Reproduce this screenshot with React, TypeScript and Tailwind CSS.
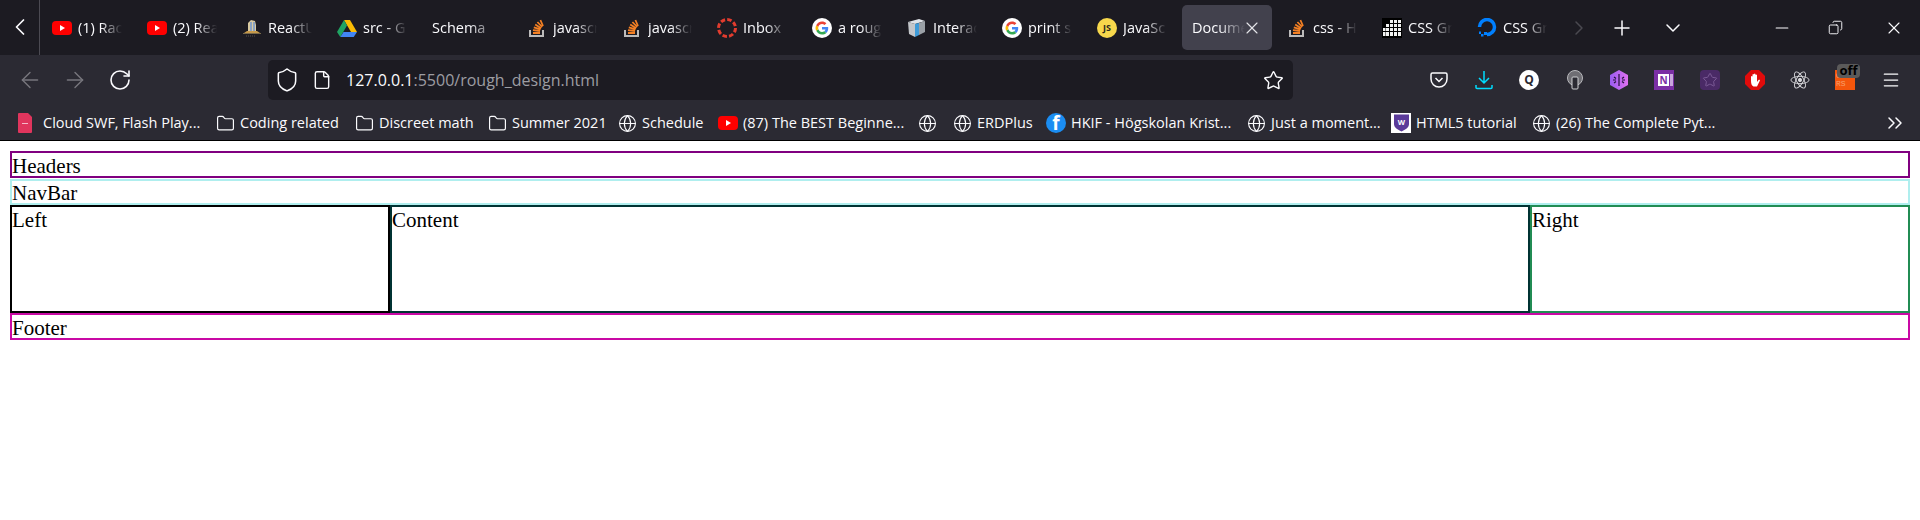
import React from 'react';
import {
  ArrowLeft,
  ArrowRight,
  ChevronDown,
  ChevronLeft,
  ChevronRight,
  ChevronsRight,
  Copy,
  Menu,
  Minus,
  Plus,
  RotateCw,
  Shield,
  Star,
  X,
  File,
  Folder,
  Globe,
} from 'lucide-react';

const YouTube = () => (
  <svg viewBox="0 0 20 14" className="w-5 h-[14px] shrink-0">
    <rect width="20" height="14" rx="4" fill="#ff0000" />
    <path d="M8 4l5 3-5 3z" fill="#fff" />
  </svg>
);

const StackOverflow = () => (
  <svg viewBox="0 0 20 20" className="w-5 h-5 shrink-0" fill="none">
    <path d="M3 12v6h13v-6" stroke="#bcbbbb" strokeWidth="2" />
    <path d="M6 15h7M6 12.2l7 .8M6.8 9.4l6.8 2M8.2 6.6l6 3.6M10.4 4l4.8 5M13.4 2l2.6 6" stroke="#f48024" strokeWidth="1.8" />
  </svg>
);

const GoogleG = () => (
  <svg viewBox="0 0 20 20" className="w-5 h-5 shrink-0">
    <circle cx="10" cy="10" r="10" fill="#fff" />
    <path d="M16.2 10.2c0-.5 0-.9-.1-1.3H10v2.5h3.5c-.2.8-.6 1.5-1.3 1.9l2.1 1.6c1.2-1.1 1.9-2.8 1.9-4.7z" fill="#4285f4" />
    <path d="M10 16.5c1.8 0 3.2-.6 4.3-1.6l-2.1-1.6c-.6.4-1.3.6-2.2.6-1.7 0-3.1-1.1-3.6-2.7L4.2 12.8c1.1 2.2 3.300 3.700 5.800 3.700z" fill="#34a853" />
    <path d="M6.400 11.200c-.3-.8-.3-1.600 0-2.400L4.200 7.200c-.9 1.800-.9 3.800 0 5.600z" fill="#fbbc05" />
    <path d="M10 6.100c1 0 1.800.3 2.500 1l1.900-1.900C13.200 4.100 11.700 3.500 10 3.500c-2.500 0-4.700 1.500-5.800 3.700l2.200 1.600c.5-1.600 1.900-2.700 3.600-2.700z" fill="#ea4335" />
  </svg>
);

const ReactU = () => (
  <svg viewBox="0 0 20 20" className="w-5 h-5 shrink-0">
    <path d="M6 14V5l3-3 4 1 1 4v7z" fill="#d9c9a0" />
    <path d="M8 4h2v10H8zM11 4h2v10h-2z" fill="#8aa2c0" />
    <path d="M5 13h10l3 2H2z" fill="#c79a4a" />
    <path d="M1 15.500h18" stroke="#7a6a4a" strokeWidth="1" />
    <path d="M4 18h10" stroke="#55534f" strokeWidth="1" strokeDasharray="1 1" />
  </svg>
);

const Drive = () => (
  <svg viewBox="0 0 20 20" className="w-5 h-5 shrink-0">
    <path d="M7 2h6l7 12h-6z" fill="#fbbc04" />
    <path d="M7 2l3 5.500L3.300 19 0 14z" fill="#1fa463" />
    <path d="M6.500 14H20l-3.300 5H3.300z" fill="#4285f4" />
  </svg>
);

const Canvas = () => (
  <svg viewBox="0 0 20 20" className="w-5 h-5 shrink-0" fill="none">
    <circle cx="10" cy="10" r="8.500" stroke="#e23c2e" strokeWidth="3" strokeDasharray="4.500 2.170" />
  </svg>
);

const Cube = () => (
  <svg viewBox="0 0 20 20" className="w-5 h-5 shrink-0">
    <path d="M1 4l11-3 6 2-10 3z" fill="#dfe3e8" />
    <path d="M1 4l7 2v13l-6-3z" fill="#c3c6ca" />
    <path d="M8 6l4-1v12l-4 2z" fill="#3f9bd8" />
    <path d="M12 5l6-2v11l-6 3z" fill="#9aa0a6" />
  </svg>
);

const JsBadge = () => (
  <div className="w-5 h-5 shrink-0 rounded-full bg-[#f7d84c] flex items-center justify-center text-[9px] font-bold text-[#2b2a1a]">
    JS
  </div>
);

const GridIcon = () => (
  <svg viewBox="0 0 20 20" className="w-5 h-5 shrink-0">
    <rect width="20" height="20" fill="#000" />
    <path d="M8 2h3v3H8zM12 2h3v3h-3zM16 2h3v3h-3zM4 6h3v3H4zM8 6h3v3H8zM12 6h3v3h-3zM16 6h3v3h-3zM1 10h2.500v3H1zM4 10h3v3H4zM8 10h3v3H8zM12 10h3v3h-3zM16 10h3v3h-3zM1 14h2.500v4H1zM4 14h3v4H4zM8 14h3v4H8zM12 14h3v4h-3zM16 14h3v4h-3z" fill="#f2f2f2" />
  </svg>
);

const DigitalOcean = () => (
  <svg viewBox="0 0 20 20" className="w-5 h-5 shrink-0" fill="none">
    <path d="M10 16.500A7.500 7.500 0 1 0 2.500 9" stroke="#0080ff" strokeWidth="3.500" />
    <path d="M7 14h3v3H7zM4 16h2.500v2.500H4zM2 13.500h2V16H2z" fill="#0080ff" />
  </svg>
);

type Tab = { title: string; icon?: React.ReactNode; active?: boolean };

const tabs: Tab[] = [
  { title: '(1) Rac', icon: <YouTube /> },
  { title: '(2) Rea', icon: <YouTube /> },
  { title: 'ReactU', icon: <ReactU /> },
  { title: 'src - G', icon: <Drive /> },
  { title: 'Schema' },
  { title: 'javascr', icon: <StackOverflow /> },
  { title: 'javascr', icon: <StackOverflow /> },
  { title: 'Inbox', icon: <Canvas /> },
  { title: 'a roug', icon: <GoogleG /> },
  { title: 'Interac', icon: <Cube /> },
  { title: 'print s', icon: <GoogleG /> },
  { title: 'JavaSc', icon: <JsBadge /> },
  { title: 'Docume', active: true },
  { title: 'css - H', icon: <StackOverflow /> },
  { title: 'CSS Gr', icon: <GridIcon /> },
  { title: 'CSS Gr', icon: <DigitalOcean /> },
];

const TabItem = ({ tab }: { tab: Tab }) => (
  <div className="w-[95px] shrink-0 h-[45px] pl-px pr-1">
    <div className={`relative h-full flex items-center gap-[6px] pl-[10px] rounded-[5px] ${tab.active ? 'bg-[#42414d] pr-[26px]' : 'pr-[9px]'}`}>
      {tab.icon}
      <span className="flex-1 overflow-hidden whitespace-nowrap text-[14.5px] text-[#fbfbfe] [mask-image:linear-gradient(to_right,black_50%,transparent_98%)]">
        {tab.title}
      </span>
      {tab.active && <X className="absolute right-[10px] top-[13px] w-5 h-5 text-[#e4e4e8]" strokeWidth={1.4} />}
    </div>
  </div>
);

const TabStrip = () => (
  <div className="h-[55px] bg-[#1c1b22] flex items-center text-[#fbfbfe]">
    <div className="w-[39px] h-full shrink-0 flex items-center justify-center border-r border-[#4b4a52] box-content">
      <ChevronLeft className="w-7 h-7 -mt-px" strokeWidth={1.5} />
    </div>
    <div className="flex ml-px">
      {tabs.map((t, i) => (
        <TabItem key={i} tab={t} />
      ))}
    </div>
    <ChevronRight className="w-6 h-6 ml-[6px] text-[#4a4950] shrink-0" strokeWidth={1.5} />
    <Plus className="w-6 h-6 ml-[19px] shrink-0" strokeWidth={1.5} />
    <ChevronDown className="w-6 h-6 ml-[27px] shrink-0" strokeWidth={1.5} />
    <div className="ml-auto flex items-center pr-4">
      <Minus className="w-5 h-5 mr-9" strokeWidth={1.3} />
      <Copy className="w-[15px] h-[15px] mr-[41px] -scale-x-100" strokeWidth={1.5} />
      <X className="w-5 h-5" strokeWidth={1.3} />
    </div>
  </div>
);

const HexIcon = () => (
  <svg viewBox="0 0 20 22" className="w-5 h-[22px]">
    <defs>
      <linearGradient id="hex" x1="0" x2="1">
        <stop offset="0" stopColor="#9a5cf0" />
        <stop offset="1" stopColor="#e070f0" />
      </linearGradient>
    </defs>
    <path d="M10 1l9 5v10l-9 5-9-5V6z" fill="url(#hex)" />
    <path d="M10 5v12M5 8l2 1.500M5 14l2-1.500M15 8l-2 1.500M15 14l-2-1.500M4 11h3M13 11h3" stroke="#24123a" strokeWidth="1.200" />
  </svg>
);

const OneNote = () => (
  <div className="w-5 h-5 bg-[#7b2fa5] relative flex items-center">
    <div className="w-[11px] h-3 ml-1 bg-white text-[#7b2fa5] text-[10px] leading-3 font-bold text-center">N</div>
    <div className="w-[3px] h-3 ml-px bg-[#c9a6dd]" />
  </div>
);

const UBlock = () => (
  <svg viewBox="0 0 20 20" className="w-5 h-5">
    <path d="M6 0h8l6 6v8l-6 6H6l-6-6V6z" fill="#e00b0b" />
    <path d="M6 11V6.500a1 1 0 0 1 1.500 0V10V4.500a1 1 0 0 1 1.500 0V10V4a1 1 0 0 1 1.500 0v6V5a1 1 0 0 1 1.500 0v7l1.500-2c1-.8 1.800 0 1.300.8L12 16.500H8.500C7 16 6 14 6 11z" fill="#fff" />
  </svg>
);

const Atom = () => (
  <svg viewBox="-11 -11 22 22" className="w-5 h-5" fill="none" stroke="#d8d8dc" strokeWidth="1">
    <ellipse rx="10" ry="4" />
    <ellipse rx="10" ry="4" transform="rotate(60)" />
    <ellipse rx="10" ry="4" transform="rotate(120)" />
    <circle r="1.800" fill="#d8d8dc" />
  </svg>
);

const Toolbar = () => (
  <div className="h-[45px] bg-[#2b2a33] flex items-start text-[#fbfbfe]">
    <div className="h-10 mt-[5px] w-[268px] shrink-0 flex items-center">
      <ArrowLeft className="w-[26px] h-[26px] ml-[17px] text-[#77767d]" strokeWidth={1.3} />
      <ArrowRight className="w-[26px] h-[26px] ml-[19px] text-[#77767d]" strokeWidth={1.3} />
      <RotateCw className="w-6 h-6 ml-[20px]" strokeWidth={1.6} />
    </div>
    <div className="mt-[5px] w-[1025px] h-10 bg-[#1c1b22] rounded-[5px] flex items-center pl-[6px] pr-[9px]">
      <Shield className="w-[26px] h-[26px]" strokeWidth={1.4} />
      <File className="w-5 h-5 ml-3" strokeWidth={1.7} />
      <div className="ml-[14px] text-[16px] whitespace-nowrap">
        127.0.0.1<span className="text-[#9d9da2]">:5500/rough_design.html</span>
      </div>
      <Star className="w-[21px] h-[21px] ml-auto" strokeWidth={1.6} />
    </div>
    <div className="ml-[137px] mt-[5px] h-10 flex items-center">
      <svg viewBox="0 0 18 16" className="w-[18px] h-4" fill="none" stroke="#fbfbfe" strokeWidth="1.500">
        <path d="M2.500 1h13A1.500 1.500 0 0 1 17 2.500V7a8 8 0 0 1-16 0V2.500A1.500 1.500 0 0 1 2.500 1z" />
        <path d="M5.500 6L9 9.500 12.500 6" />
      </svg>
      <svg viewBox="0 0 18 20" className="w-[18px] h-5 ml-[27px]" fill="none" stroke="#00ddff" strokeWidth="1.500">
        <path d="M9 1v12M4 8l5 5 5-5M1 15v2.500a1 1 0 0 0 1 1h14a1 1 0 0 0 1-1V15" />
      </svg>
      <div className="w-5 h-5 ml-[26px] rounded-full bg-white flex items-center justify-center text-[#2b2a33] text-[12px] font-bold">Q</div>
      <svg viewBox="0 0 18 20" className="w-[18px] h-5 ml-[27px]">
        <circle cx="9" cy="8" r="7.500" fill="#6f6e74" stroke="#b9b9bd" strokeWidth="1" />
        <rect x="6" y="7" width="6" height="12" rx="1" fill="#2b2a33" stroke="#d0d0d4" strokeWidth="1" />
      </svg>
      <div className="ml-[25px]"><HexIcon /></div>
      <div className="ml-[25px]"><OneNote /></div>
      <div className="ml-[26px] w-5 h-5 rounded bg-[#4a2a66] flex items-center justify-center">
        <Star className="w-4 h-4 text-[#7b5a96]" strokeWidth={1.5} />
      </div>
      <div className="ml-[25px]"><UBlock /></div>
      <div className="ml-[25px]"><Atom /></div>
      <div className="ml-[25px] relative w-5 h-5 bg-[#f4560c] text-[#f7a06c] text-[8px] leading-[8px] font-mono pl-px pt-[2px]">
        CO<br />RS
        <div className="absolute left-[2px] -top-[6px] w-[23px] h-[14px] rounded-sm bg-[#5b5a5a] text-black text-[13px] leading-[13px] font-bold text-center font-sans">
          off
        </div>
      </div>
      <Menu className="w-5 h-5 ml-[26px]" strokeWidth={1.5} />
    </div>
  </div>
);

const FolderIcon = () => <Folder className="w-[19px] h-[19px] shrink-0" strokeWidth={1.5} />;
const GlobeIcon = () => <Globe className="w-[19px] h-[19px] shrink-0" strokeWidth={1.4} />;

const Facebook = () => (
  <div className="w-5 h-5 shrink-0 rounded-full bg-[#1b8df2] overflow-hidden flex justify-center items-end text-white text-[19px] leading-[19px] font-bold">
    f
  </div>
);

const SwfFile = () => (
  <svg viewBox="0 0 14 20" className="w-[14px] h-5 shrink-0 ml-[3px] mr-[6px]">
    <path d="M0 1a1 1 0 0 1 1-1h9l4 4v15a1 1 0 0 1-1 1H1a1 1 0 0 1-1-1z" fill="#e0355d" />
    <path d="M4 10.500h6" stroke="#f5b8c8" strokeWidth="1" />
  </svg>
);

const WShield = () => (
  <div className="w-5 h-5 shrink-0 bg-white flex items-center justify-center">
    <svg viewBox="0 0 16 18" className="w-[15px] h-[18px]">
      <path d="M0 0h16v10c0 4-4 6-8 8-4-2-8-4-8-8z" fill="#5b3a9a" />
      <text x="8" y="11" fontSize="8" fontWeight="700" textAnchor="middle" fill="#fff" fontFamily="Open Sans, sans-serif">W</text>
    </svg>
  </div>
);

const bookmarks: { label: string; icon: React.ReactNode; cls: string }[] = [
  { label: 'Cloud SWF, Flash Play...', icon: <SwfFile />, cls: 'w-[201px]' },
  { label: 'Coding related', icon: <FolderIcon />, cls: 'w-[139px]' },
  { label: 'Discreet math', icon: <FolderIcon />, cls: 'w-[133px]' },
  { label: 'Summer 2021', icon: <FolderIcon />, cls: 'w-[130px]' },
  { label: 'Schedule', icon: <GlobeIcon />, cls: 'w-[100px]' },
  { label: '(87) The BEST Beginne...', icon: <YouTube />, cls: 'w-[200px]' },
  { label: '', icon: <GlobeIcon />, cls: 'w-[35px]' },
  { label: 'ERDPlus', icon: <GlobeIcon />, cls: 'w-[93px]' },
  { label: 'HKIF - Högskolan Krist...', icon: <Facebook />, cls: 'w-[201px]' },
  { label: 'Just a moment...', icon: <GlobeIcon />, cls: 'w-[144px]' },
  { label: 'HTML5 tutorial', icon: <WShield />, cls: 'w-[141px]' },
  { label: '(26) The Complete Pyt...', icon: <GlobeIcon />, cls: 'w-[190px]' },
];

const Bookmarks = () => (
  <div className="h-[34px] pt-[6px] bg-[#2b2a33] flex items-center pl-[15px] text-[#fbfbfe] text-[14.5px] border-b border-black box-content">
    {bookmarks.map((b, i) => (
      <div key={i} className={`flex items-center gap-[5px] shrink-0 whitespace-nowrap ${b.cls}`}>
        {b.icon}
        {b.label && <span>{b.label}</span>}
      </div>
    ))}
    <ChevronsRight className="w-6 h-6 ml-[161px]" strokeWidth={1.5} />
  </div>
);

const boxText = "font-['Liberation_Serif',serif] text-[21px] text-black";

const App: React.FC = () => {
  return (
    <div className="w-[1920px] h-[520px] bg-white overflow-hidden font-['Open_Sans',sans-serif]">
      <TabStrip />
      <Toolbar />
      <Bookmarks />

      <div className={`mx-[10px] mt-[10px] flex flex-col ${boxText}`}>
        <div className="h-[27px] border-2 border-[#800080] leading-[26px]">Headers</div>
        <div className="h-[26px] mt-px border-2 border-[#afeeee] leading-[25px]">NavBar</div>
        <div className="grid grid-cols-[1fr_3fr_1fr] h-[108px] leading-[26px]">
          <div className="border-2 border-black">Left</div>
          <div className="border-2 border-[#003333]">Content</div>
          <div className="border-2 border-[#218c53]">Right</div>
        </div>
        <div className="h-[27px] border-2 border-[#c909a5] leading-[26px]">Footer</div>
      </div>
    </div>
  );
};

export default App;
